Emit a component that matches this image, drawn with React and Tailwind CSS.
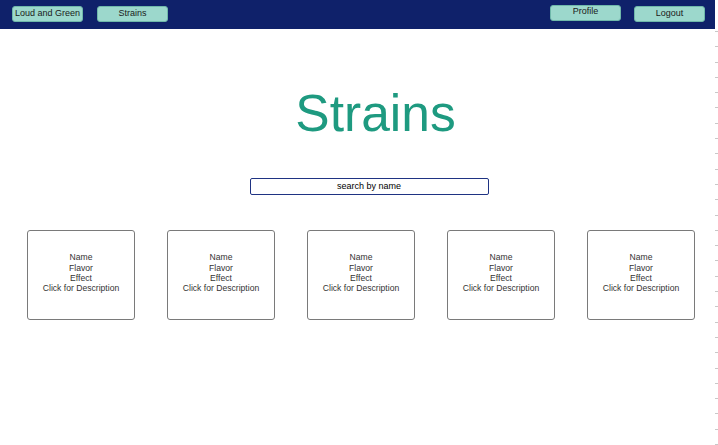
const cards = [1, 2, 3, 4, 5];

function NavButton({ label, className = '' }) {
  return (
    <button
      className={`h-[16px] w-[71px] rounded-[3px] border border-[#6fb8aa] bg-[#9cd8cc] text-[9px] leading-none text-[#1a1a1a] ${className}`}
    >
      {label}
    </button>
  );
}

export default function App() {
  return (
    <div className="flex h-[445px] w-[718px] bg-white font-['Liberation_Sans',Arial,sans-serif]">
      <div className="w-[715px] shrink-0">
        {/* Nav */}
        <nav className="flex h-[29px] items-start bg-[#0f216a] pl-[12px] pr-[10px]">
          <NavButton label="Loud and Green" className="mt-[6px] pb-[1px]" />
          <NavButton label="Strains" className="ml-[14px] mt-[6px] pb-[1px]" />
          <div className="flex-1" />
          <NavButton label="Profile" className="mt-[5px] pb-[3px]" />
          <NavButton label="Logout" className="ml-[13px] mt-[6px] pb-[1px]" />
        </nav>

        {/* Title */}
        <h1 className="mt-[52px] pl-[36px] text-center text-[51.5px] leading-[64px] text-[#1e9a80]">
          Strains
        </h1>

        {/* Search */}
        <div className="mt-[33px] flex justify-center pl-[23px]">
          <div className="flex h-[17px] w-[239px] items-center justify-center rounded-[2px] border border-[#1f3383] text-[9px] text-black">
            search by name
          </div>
        </div>

        {/* Cards */}
        <div className="mt-[35px] flex gap-[32px] pl-[27px]">
          {cards.map((c) => (
            <div
              key={c}
              className="flex h-[90px] w-[108px] flex-col items-center justify-center rounded-[3px] border border-[#7a7a7a] pb-[4px] text-center text-[8.6px] leading-[10.4px] text-[#333]"
            >
              <span>Name</span>
              <span>Flavor</span>
              <span>Effect</span>
              <span>Click for Description</span>
            </div>
          ))}
        </div>
      </div>

      {/* ruler ticks on the right edge */}
      <div className="flex flex-1 flex-col items-end pt-[31px] gap-[14.5px]">
        {Array.from({ length: 28 }).map((_, i) => (
          <div key={i} className="h-px w-[3px] bg-[#c8c8c8]" />
        ))}
      </div>
    </div>
  );
}
